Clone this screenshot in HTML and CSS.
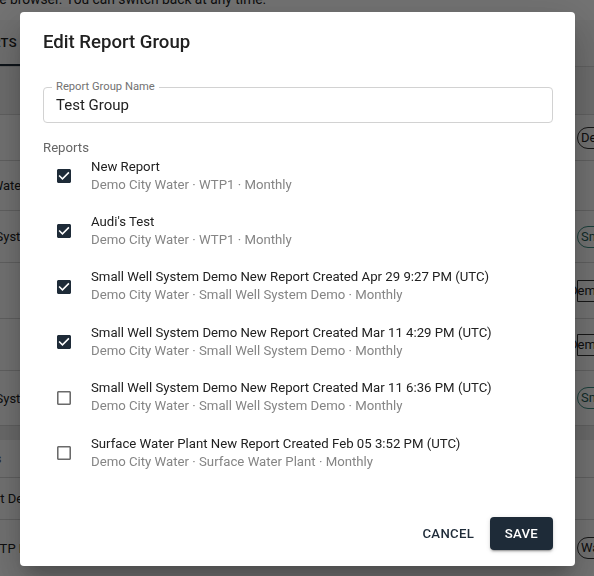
FILE: index.html
```html
<!DOCTYPE html>
<html>
<head>
<meta charset="utf-8">
<link rel="stylesheet" href="styles.css">
</head>
<body>
<div class="page">
  <div class="notice">You are viewing the new reports experience in the browser. You can switch back at any time.</div>
  <div class="tabbar">
    <span class="tab active">REPORTS</span>
  </div>
  <div class="toolbar"></div>
  <div class="rows">
    <div class="row r1"><span class="cell"></span><span class="chip">Demo City</span></div>
    <div class="row r2"><span class="cell">Demo City Water</span><span class="chip empty"></span></div>
    <div class="row r3"><span class="cell">Small Well System</span><span class="chip teal">Small Well</span></div>
    <div class="row r4"><span class="cell"></span><span class="chip cut">Demo</span></div>
    <div class="row r5"><span class="cell"></span><span class="chip cut">Demo</span></div>
    <div class="row r6"><span class="cell">Small Well System</span><span class="chip teal">Small Well</span></div>
  </div>
  <div class="gap"></div>
  <div class="rows">
    <div class="row head"><span class="cell">Report Groups</span></div>
    <div class="row r7"><span class="cell">Report Demo</span></div>
    <div class="row r8"><span class="cell">WTP New</span><span class="chip">Water</span></div>
  </div>
</div>

<div class="overlay"></div>

<div class="dialog" role="dialog">
  <h2 class="title">Edit Report Group</h2>
  <div class="field">
    <span class="field-label">Report Group Name</span>
    <span class="field-value">Test Group</span>
  </div>
  <div class="section-label">Reports</div>
  <ul class="items">
    <li class="item">
      <svg class="cb on" viewBox="3 3 18 18"><path d="M19 3H5c-1.11 0-2 .9-2 2v14c0 1.1.89 2 2 2h14c1.11 0 2-.9 2-2V5c0-1.1-.89-2-2-2zm-9 14l-5-5 1.41-1.41L10 14.17l7.59-7.59L19 8l-9 9z"/></svg>
      <div class="item-text"><div class="primary">New Report</div><div class="secondary">Demo City Water · WTP1 · Monthly</div></div>
    </li>
    <li class="item">
      <svg class="cb on" viewBox="3 3 18 18"><path d="M19 3H5c-1.11 0-2 .9-2 2v14c0 1.1.89 2 2 2h14c1.11 0 2-.9 2-2V5c0-1.1-.89-2-2-2zm-9 14l-5-5 1.41-1.41L10 14.17l7.59-7.59L19 8l-9 9z"/></svg>
      <div class="item-text"><div class="primary">Audi's Test</div><div class="secondary">Demo City Water · WTP1 · Monthly</div></div>
    </li>
    <li class="item">
      <svg class="cb on" viewBox="3 3 18 18"><path d="M19 3H5c-1.11 0-2 .9-2 2v14c0 1.1.89 2 2 2h14c1.11 0 2-.9 2-2V5c0-1.1-.89-2-2-2zm-9 14l-5-5 1.41-1.41L10 14.17l7.59-7.59L19 8l-9 9z"/></svg>
      <div class="item-text"><div class="primary">Small Well System Demo New Report Created Apr 29 9:27 PM (UTC)</div><div class="secondary">Demo City Water · Small Well System Demo · Monthly</div></div>
    </li>
    <li class="item">
      <svg class="cb on" viewBox="3 3 18 18"><path d="M19 3H5c-1.11 0-2 .9-2 2v14c0 1.1.89 2 2 2h14c1.11 0 2-.9 2-2V5c0-1.1-.89-2-2-2zm-9 14l-5-5 1.41-1.41L10 14.17l7.59-7.59L19 8l-9 9z"/></svg>
      <div class="item-text"><div class="primary">Small Well System Demo New Report Created Mar 11 4:29 PM (UTC)</div><div class="secondary">Demo City Water · Small Well System Demo · Monthly</div></div>
    </li>
    <li class="item">
      <svg class="cb off" viewBox="3 3 18 18"><path d="M19 5v14H5V5h14m0-2H5c-1.1 0-2 .9-2 2v14c0 1.1.9 2 2 2h14c1.1 0 2-.9 2-2V5c0-1.1-.9-2-2-2z"/></svg>
      <div class="item-text"><div class="primary">Small Well System Demo New Report Created Mar 11 6:36 PM (UTC)</div><div class="secondary">Demo City Water · Small Well System Demo · Monthly</div></div>
    </li>
    <li class="item">
      <svg class="cb off" viewBox="3 3 18 18"><path d="M19 5v14H5V5h14m0-2H5c-1.1 0-2 .9-2 2v14c0 1.1.9 2 2 2h14c1.1 0 2-.9 2-2V5c0-1.1-.9-2-2-2z"/></svg>
      <div class="item-text"><div class="primary">Surface Water Plant New Report Created Feb 05 3:52 PM (UTC)</div><div class="secondary">Demo City Water · Surface Water Plant · Monthly</div></div>
    </li>
  </ul>
  <div class="actions">
    <button class="btn text">Cancel</button>
    <button class="btn contained">Save</button>
  </div>
</div>
</body>
</html>
```

FILE: styles.css
```css
* { box-sizing: border-box; }
html, body { margin: 0; padding: 0; }
body {
  font-family: Roboto, "Liberation Sans", sans-serif;
  color: #212121;
  background: #ffffff;
  width: 594px;
  height: 576px;
  overflow: hidden;
}

/* ---------- background page (cropped, under the modal) ---------- */
.page { width: 594px; }
.notice {
  font-size: 13.8px;
  line-height: 18px;
  margin-top: -10px;
  height: 30px;
  text-indent: -296px;
  white-space: nowrap;
  overflow: hidden;
  background: #ffffff;
}
.tabbar {
  height: 47px;
  background: #f7f7f7;
  border-bottom: 1px solid #d8d8d8;
  display: flex;
  align-items: stretch;
}
.tab {
  font-size: 13px;
  font-weight: 500;
  letter-spacing: 0.4px;
  margin-left: -50px;
  padding: 0 8px;
  display: flex;
  align-items: center;
  border-bottom: 2px solid #1e2b38;
}
.toolbar { height: 48px; background: #f2f2f2; border-bottom: 1px solid #d8d8d8; }
.rows { background: #fff; }
.row {
  display: flex;
  justify-content: space-between;
  align-items: center;
  border-bottom: 1px solid #d6d6d6;
  font-size: 13px;
}
.cell { white-space: nowrap; overflow: hidden; width: 40px; }
.r1 { height: 46px; }
.r2 { height: 50px; }
.r3 { height: 52px; }
.r4 { height: 56px; }
.r5 { height: 52px; }
.r6 { height: 55px; }
.r2 .cell { text-indent: -71px; }
.r3 .cell, .r6 .cell { text-indent: -68px; }
.gap { height: 14px; background: #ececec; }
.head { height: 38px; }
.head .cell { text-indent: -82px; color: #555; }
.r7 { height: 42px; }
.r7 .cell { text-indent: -34px; }
.r8 { height: 56px; border-bottom: none; }
.r8 .cell { text-indent: -12px; }
.chip {
  height: 22px;
  border: 1px solid #333;
  border-radius: 11px;
  padding: 0 3px;
  font-size: 13px;
  line-height: 20px;
  white-space: nowrap;
  margin-right: -60px;
  width: 77px;
}
.chip.empty { border: none; }
.chip.teal { border-color: #3e8e84; color: #1f5e57; }
.chip.cut { border-radius: 0 11px 11px 0; text-indent: -12px; }

.overlay {
  position: fixed;
  inset: 0;
  background: rgba(0, 0, 0, 0.55);
}

/* ---------- dialog ---------- */
.dialog {
  position: fixed;
  left: 20px;
  top: 12px;
  width: 555px;
  height: 554px;
  background: #fff;
  border-radius: 4px;
  box-shadow: 0 11px 15px -7px rgba(0,0,0,.2), 0 24px 38px 3px rgba(0,0,0,.14), 0 9px 46px 8px rgba(0,0,0,.12);
  display: flex;
  flex-direction: column;
}
.title {
  margin: 0;
  padding: 15px 23px 0;
  font-size: 18.6px;
  font-weight: 500;
  line-height: 30px;
  color: #212121;
}
.field {
  position: relative;
  margin: 30px 22px 0 23px;
  height: 36px;
  border: 1px solid #d2d2d2;
  border-radius: 4px;
  padding: 0 12px;
  display: flex;
  align-items: center;
}
.field-label {
  position: absolute;
  left: 8px;
  top: -8px;
  padding: 0 4px;
  background: #fff;
  font-size: 11.2px;
  line-height: 13px;
  color: #727272;
}
.field-value { font-size: 15px; color: #212121; }
.section-label {
  margin: 16px 23px 0;
  font-size: 13.2px;
  line-height: 18px;
  color: #666;
}
.items {
  list-style: none;
  margin: 0.6px 0 0;
  padding: 0 0 0 37px;
  display: flex;
  flex-direction: column;
  gap: 19.4px;
}
.item { display: flex; align-items: center; gap: 20px; }
.cb { width: 14px; height: 14px; flex: none; margin-top: 1px; }
.cb.on { fill: #1e2b38; }
.cb.off { fill: #6a6a6a; }
.primary, .secondary { font-size: 13.2px; line-height: 18px; white-space: nowrap; }
.primary { color: #212121; }
.secondary { color: #858585; }

.actions {
  margin-top: auto;
  display: flex;
  justify-content: flex-end;
  gap: 8px;
  padding: 0 22px 16px;
}
.btn {
  font-family: Roboto, "Liberation Sans", sans-serif;
  height: 33px;
  font-size: 13.2px;
  font-weight: 500;
  letter-spacing: 0.3px;
  text-transform: uppercase;
  border: none;
  border-radius: 4px;
  cursor: pointer;
}
.btn.text { background: transparent; color: #1e2b38; padding: 0 7.5px; }
.btn.contained {
  background: #1e2b38;
  color: #fff;
  padding: 0 15px;
  box-shadow: 0 3px 1px -2px rgba(0,0,0,.2), 0 2px 2px 0 rgba(0,0,0,.14), 0 1px 5px 0 rgba(0,0,0,.12);
}
```
